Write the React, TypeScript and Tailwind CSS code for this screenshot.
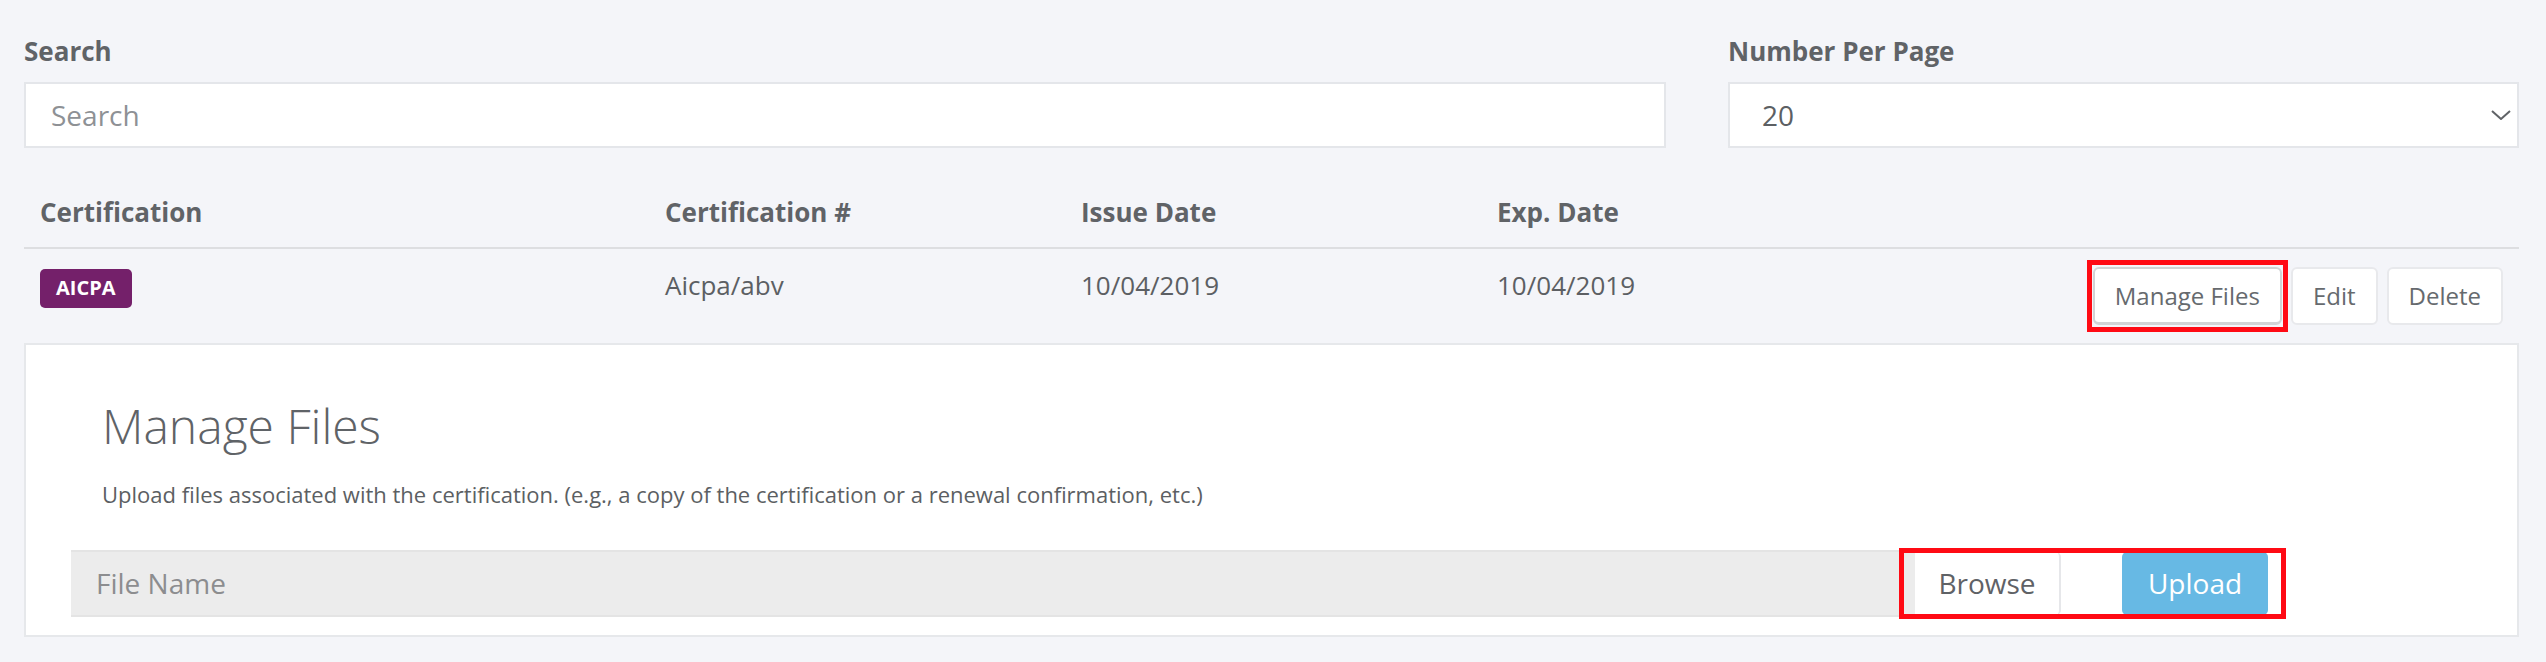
import React from "react";

const FONT = { fontFamily: '"Open Sans", "Noto Sans", Arial, sans-serif' };

function ActionButton({ label, marked = false }: { label: string; marked?: boolean }) {
  return (
    <div className="relative">
      <button
        className={
          "h-[58px] rounded-[6px] bg-white px-[20px] text-[24px] leading-none text-[#666a6e] " +
          (marked ? "border-2 border-[#d2d3d5] border-b-[3px]" : "border-2 border-[#e8e9ec]")
        }
      >
        {label}
      </button>
      {marked && (
        <div className="pointer-events-none absolute -inset-x-[6px] -inset-y-[7px] border-[5px] border-[#ff0a14]" />
      )}
    </div>
  );
}

export default function App() {
  return (
    <div className="min-h-[662px] w-full bg-[#f4f5f9] pl-[24px] pr-[27px] pt-[32px]" style={FONT}>
      {/* filtros */}
      <div className="flex gap-x-[62px]">
        <div className="w-[1642px]">
          <label className="block text-[26px] font-bold leading-[39px] text-[#606367]">Search</label>
          <div className="mt-[11px] flex h-[66px] items-center border-2 border-[#e4e6ea] bg-white pl-[25px] text-[28px] text-[#8e9195]">
            Search
          </div>
        </div>
        <div className="flex-1">
          <label className="block text-[26px] font-bold leading-[39px] text-[#606367]">Number Per Page</label>
          <div className="mt-[11px] flex h-[66px] items-center justify-between border-2 border-[#e4e6ea] bg-white pl-[32px] pr-[6px] text-[28px] text-[#5c5f63]">
            <span>20</span>
            <svg width="20" height="10" viewBox="0 0 20 10" fill="none">
              <path d="M1 1 L10 9 L19 1" stroke="#606367" strokeWidth="2" />
            </svg>
          </div>
        </div>
      </div>

      {/* tabla */}
      <div className="mt-[45px]">
        <div className="flex border-b-2 border-[#dddee1] px-[16px] pb-[15px] text-[26px] font-bold leading-[39px] text-[#606367]">
          <div className="w-[625px]">Certification</div>
          <div className="w-[416px]">Certification #</div>
          <div className="w-[416px]">Issue Date</div>
          <div className="flex-1">Exp. Date</div>
        </div>
        <div className="flex items-start px-[16px] pb-[18px] pt-[18px] text-[26px] leading-[36px] text-[#5c5f63]">
          <div className="w-[625px]">
            <span className="inline-flex h-[39px] items-center rounded-[5px] bg-[#74206a] px-[16px] text-[20px] font-bold text-white">
              AICPA
            </span>
          </div>
          <div className="w-[416px]">Aicpa/abv</div>
          <div className="w-[416px]">10/04/2019</div>
          <div className="flex-1">10/04/2019</div>
          <div className="flex gap-x-[9px]">
            <ActionButton label="Manage Files" marked />
            <ActionButton label="Edit" />
            <ActionButton label="Delete" />
          </div>
        </div>
      </div>

      {/* panel de archivos */}
      <div className="border-2 border-[#e6e8eb] bg-white pb-[18px] pl-[45px] pt-[52px]">
        <div className="pl-[31px]">
          <h2 className="text-[48px] font-light leading-[1.2] text-[#5f6367]">Manage Files</h2>
          <p className="mt-[24px] text-[22px] leading-[30px] text-[#5c5f63]">
            Upload files associated with the certification. (e.g., a copy of the certification or a renewal confirmation, etc.)
          </p>
        </div>
        <div className="mt-[41px] flex items-center">
          <div className="flex h-[67px] w-[1844px] items-center border-y-2 border-[#e4e4e4] bg-[#ececec] pl-[25px] text-[28px] text-[#8c8d8f]">
            File Name
          </div>
          <div className="relative flex items-center">
            <button className="h-[63px] w-[146px] rounded-br-[5px] rounded-tr-[5px] border-r-2 border-[#e6e7ea] bg-white text-[28px] text-[#5f6266]">
              Browse
            </button>
            <div className="w-[61px]" />
            <button className="h-[63px] w-[146px] rounded-[5px] bg-[#67b9e4] text-[28px] text-white">Upload</button>
            <div className="pointer-events-none absolute -inset-y-[4px] -left-[16px] -right-[18px] border-[5px] border-[#ff0a14]" />
          </div>
        </div>
      </div>
    </div>
  );
}
